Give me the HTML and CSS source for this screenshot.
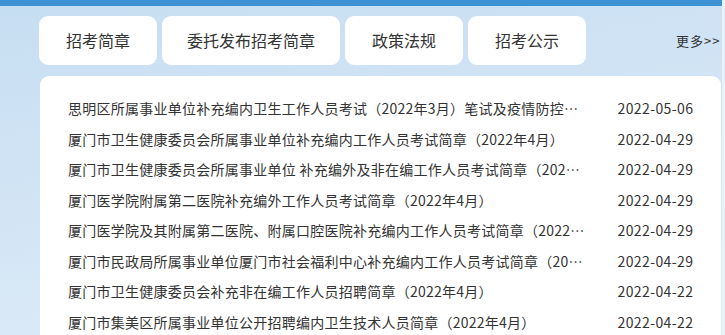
FILE: index.html
```html
<!DOCTYPE html>
<html lang="zh-CN">
<head>
    <meta charset="UTF-8">
    <title>招考简章</title>
    <link rel="stylesheet" href="styles.css">
</head>
<body>
    <div class="wrap">
        <div class="topBar"></div>
        <div class="tabBar">
            <div class="tabItem">招考简章</div>
            <div class="tabItem">委托发布招考简章</div>
            <div class="tabItem">政策法规</div>
            <div class="tabItem">招考公示</div>
            <a class="more" href="#">更多&gt;&gt;</a>
        </div>
        <div class="listBox">
            <div class="listRow">
                <span class="listTitle">思明区所属事业单位补充编内卫生工作人员考试（2022年3月）笔试及疫情防控有关事项的公告</span>
                <span class="listDate">2022-05-06</span>
            </div>
            <div class="listRow">
                <span class="listTitle">厦门市卫生健康委员会所属事业单位补充编内工作人员考试简章（2022年4月）</span>
                <span class="listDate">2022-04-29</span>
            </div>
            <div class="listRow">
                <span class="listTitle">厦门市卫生健康委员会所属事业单位 补充编外及非在编工作人员考试简章（2022年4月）</span>
                <span class="listDate">2022-04-29</span>
            </div>
            <div class="listRow">
                <span class="listTitle">厦门医学院附属第二医院补充编外工作人员考试简章（2022年4月）</span>
                <span class="listDate">2022-04-29</span>
            </div>
            <div class="listRow">
                <span class="listTitle">厦门医学院及其附属第二医院、附属口腔医院补充编内工作人员考试简章（2022年4月）</span>
                <span class="listDate">2022-04-29</span>
            </div>
            <div class="listRow">
                <span class="listTitle">厦门市民政局所属事业单位厦门市社会福利中心补充编内工作人员考试简章（2022年4月）</span>
                <span class="listDate">2022-04-29</span>
            </div>
            <div class="listRow">
                <span class="listTitle">厦门市卫生健康委员会补充非在编工作人员招聘简章（2022年4月）</span>
                <span class="listDate">2022-04-22</span>
            </div>
            <div class="listRow">
                <span class="listTitle">厦门市集美区所属事业单位公开招聘编内卫生技术人员简章（2022年4月）</span>
                <span class="listDate">2022-04-22</span>
            </div>
        </div>
    </div>
</body>
</html>
```

FILE: styles.css
```css
*{
    margin:0;
    padding:0;
    box-sizing:border-box;
}

body{
    background:#eaf2f9;
    font-family:"Noto Sans CJK SC","Noto Sans",sans-serif;
    color:#333;
    overflow:hidden;
    text-spacing-trim:space-all;
}

.wrap{
    width:722px;
    height:335px;
    overflow:hidden;
    background:linear-gradient(170deg,#c6def2 0%,#d3e5f5 50%,#e2eef9 100%);
}

.topBar{
    height:6px;
    background:#3d92d3;
}

.tabBar{
    display:flex;
    align-items:center;
    gap:5px;
    padding:10px 0 0 39px;
    white-space:nowrap;
}

.tabItem{
    height:49px;
    line-height:49px;
    padding:0 27px;
    background:#fff;
    border-radius:9px;
    font-size:16px;
    color:#333;
}
.tabItem:nth-child(2){
    padding:0 25px;
}

.more{
    margin-left:85px;
    font-size:13px;
    color:#333;
    text-decoration:none;
    letter-spacing:1px;
}

.listBox{
    margin:11px 1px 0 40px;
    padding:17px 28px;
    background:#fff;
    border-radius:9px;
    height:300px;
}

.listRow{
    display:flex;
    height:30.5px;
    line-height:30.5px;
    font-size:14px;
}

.listTitle{
    width:518px;
    white-space:nowrap;
    overflow:hidden;
    text-overflow:ellipsis;
    letter-spacing:0.25px;
}

.listDate{
    margin-left:auto;
    white-space:nowrap;
    letter-spacing:0.4px;
    margin-right:-0.4px;
}
```
